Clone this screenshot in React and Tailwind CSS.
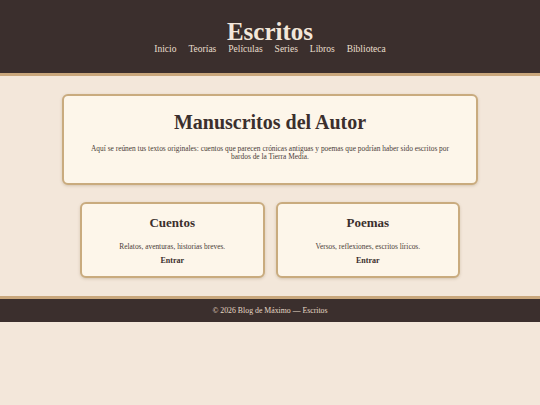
import React from 'react';

const navItems = ['Inicio', 'Teorías', 'Películas', 'Series', 'Libros', 'Biblioteca'];

const sections = [
    { title: 'Cuentos', text: 'Relatos, aventuras, historias breves.' },
    { title: 'Poemas', text: 'Versos, reflexiones, escritos líricos.' },
];

const App = () => {
    return (
        <div className="min-h-[405px] bg-[#f3e7da] font-['Liberation_Serif',serif] text-[#3b2f2d]">
            {/* Cabecera */}
            <header className="h-[76px] bg-[#3b2f2d] border-b-[3px] border-[#c9a77c] pt-[20px] text-center">
                <h1 className="text-[25px] leading-[24px] font-bold text-[#f3e7da]">Escritos</h1>
                <nav className="flex justify-center gap-[12px] text-[9.5px] leading-[10px] text-[#eadfce]">
                    {navItems.map((item) => (
                        <a key={item} href="#" className="hover:underline">
                            {item}
                        </a>
                    ))}
                </nav>
            </header>

            <main className="pt-[18px] pb-[18px]">
                <section className="mx-auto w-[416px] h-[91px] bg-[#fdf6ea] border-2 border-[#c9ab7e] rounded-md shadow-[0_1px_3px_rgba(120,90,50,0.25)] text-center pt-[14px] px-[24px]">
                    <h2 className="text-[20px] leading-[24px] font-bold">Manuscritos del Autor</h2>
                    <p className="mt-[11px] text-[7.4px] leading-[8px] text-[#4a3c38]">
                        Aquí se reúnen tus textos originales: cuentos que parecen crónicas antiguas y poemas que podrían haber sido escritos por bardos de la Tierra Media.
                    </p>
                </section>

                <div className="mx-auto mt-[17px] w-[380px] grid grid-cols-2 gap-[11px]">
                    {sections.map((s) => (
                        <div
                            key={s.title}
                            className="h-[76px] bg-[#fdf6ea] border-2 border-[#c9ab7e] rounded-md shadow-[0_1px_3px_rgba(120,90,50,0.25)] text-center pt-[11px]"
                        >
                            <h3 className="text-[13px] leading-[16px] font-bold">{s.title}</h3>
                            <p className="mt-[11px] text-[7.4px] leading-[9px] text-[#4a3c38]">{s.text}</p>
                            <a href="#" className="mt-[5px] block text-[8px] leading-[10px] font-bold">
                                Entrar
                            </a>
                        </div>
                    ))}
                </div>
            </main>

            <footer className="h-[26px] bg-[#3b2f2d] border-t-[3px] border-[#c9a77c] flex items-center justify-center text-[7.8px] text-[#e6d9c6]">
                © 2026 Blog de Máximo — Escritos
            </footer>
        </div>
    );
};

export default App;
